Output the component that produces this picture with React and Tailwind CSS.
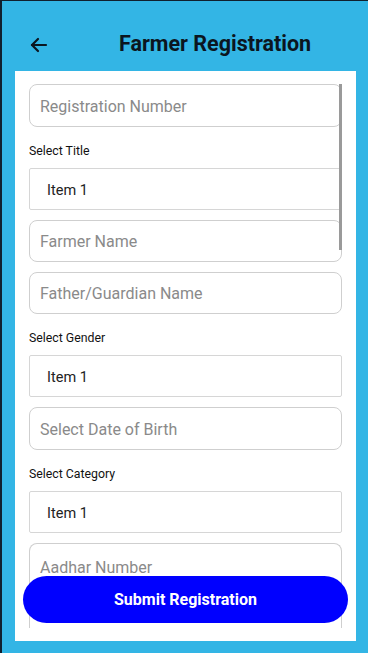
import React from "react";

function Input({ placeholder, h = "h-[42px]" }) {
  return (
    <div className={`${h} shrink-0 rounded-[8px] border border-[#cfcfcf] bg-white flex items-center pl-[10px] pt-[2px] text-[16px] text-[#8a8a8a]`}>
      {placeholder}
    </div>
  );
}

function Select() {
  return (
    <div className="h-[42px] shrink-0 rounded-[2px] border border-[#d6d6d6] bg-white flex items-center pl-[17px] pt-[3px] text-[14.5px] text-[#222]">
      Item 1
    </div>
  );
}

function Label({ children }) {
  return <div className="text-[12.3px] text-[#111] leading-[14px] mt-[17px] mb-[10px]">{children}</div>;
}

export default function App() {
  return (
    <div
      className="w-[368px] h-[653px] bg-[#33b5e5] border-l-2 border-t border-[#10202e] flex flex-col overflow-hidden"
      style={{ fontFamily: "Roboto, 'Liberation Sans', sans-serif" }}
    >
      <div className="h-[70px] shrink-0 flex items-center relative">
        <svg className="absolute left-[28px] top-[36px]" width="18" height="16" viewBox="0 0 18 16" fill="none" stroke="#0b1520" strokeWidth="2.2" strokeLinecap="round" strokeLinejoin="round">
          <path d="M16 8H2" />
          <path d="M8 2L2 8L8 14" />
        </svg>
        <div className="absolute left-[117px] top-[29px] text-[21.5px] font-bold text-[#0b1520] leading-[28px]">
          Farmer Registration
        </div>
      </div>
      <div className="ml-[13px] mr-[12px] h-[570px] shrink-0 bg-white relative pt-[13px] pb-[13px] px-[14px] flex">
        <div className="flex-1 overflow-hidden flex flex-col relative">
          <Input placeholder="Registration Number" h="h-[43px]" />
          <Label>Select Title</Label>
          <Select />
          <div className="h-[10px] shrink-0" />
          <Input placeholder="Farmer Name" />
          <div className="h-[10px] shrink-0" />
          <Input placeholder="Father/Guardian Name" />
          <Label>Select Gender</Label>
          <Select />
          <div className="h-[10px] shrink-0" />
          <Input placeholder="Select Date of Birth" h="h-[43px]" />
          <Label>Select Category</Label>
          <Select />
          <div className="h-[10px] shrink-0" />
          <div className="shrink-0 rounded-t-[8px] border border-b-0 border-[#cfcfcf] bg-white flex items-start pt-[12px] pl-[10px] text-[16px] text-[#8a8a8a] flex-1 min-h-[85px]">
            Aadhar Number
          </div>
          <div className="absolute right-0 top-0 w-[3px] h-[166px] bg-[#9a9a9a]" />
        </div>
        <div className="absolute left-[8px] right-[8px] bottom-[18px] h-[47px] rounded-full bg-[#0000ff] flex items-center justify-center text-white font-bold text-[16px]">
          Submit Registration
        </div>
      </div>
    </div>
  );
}
